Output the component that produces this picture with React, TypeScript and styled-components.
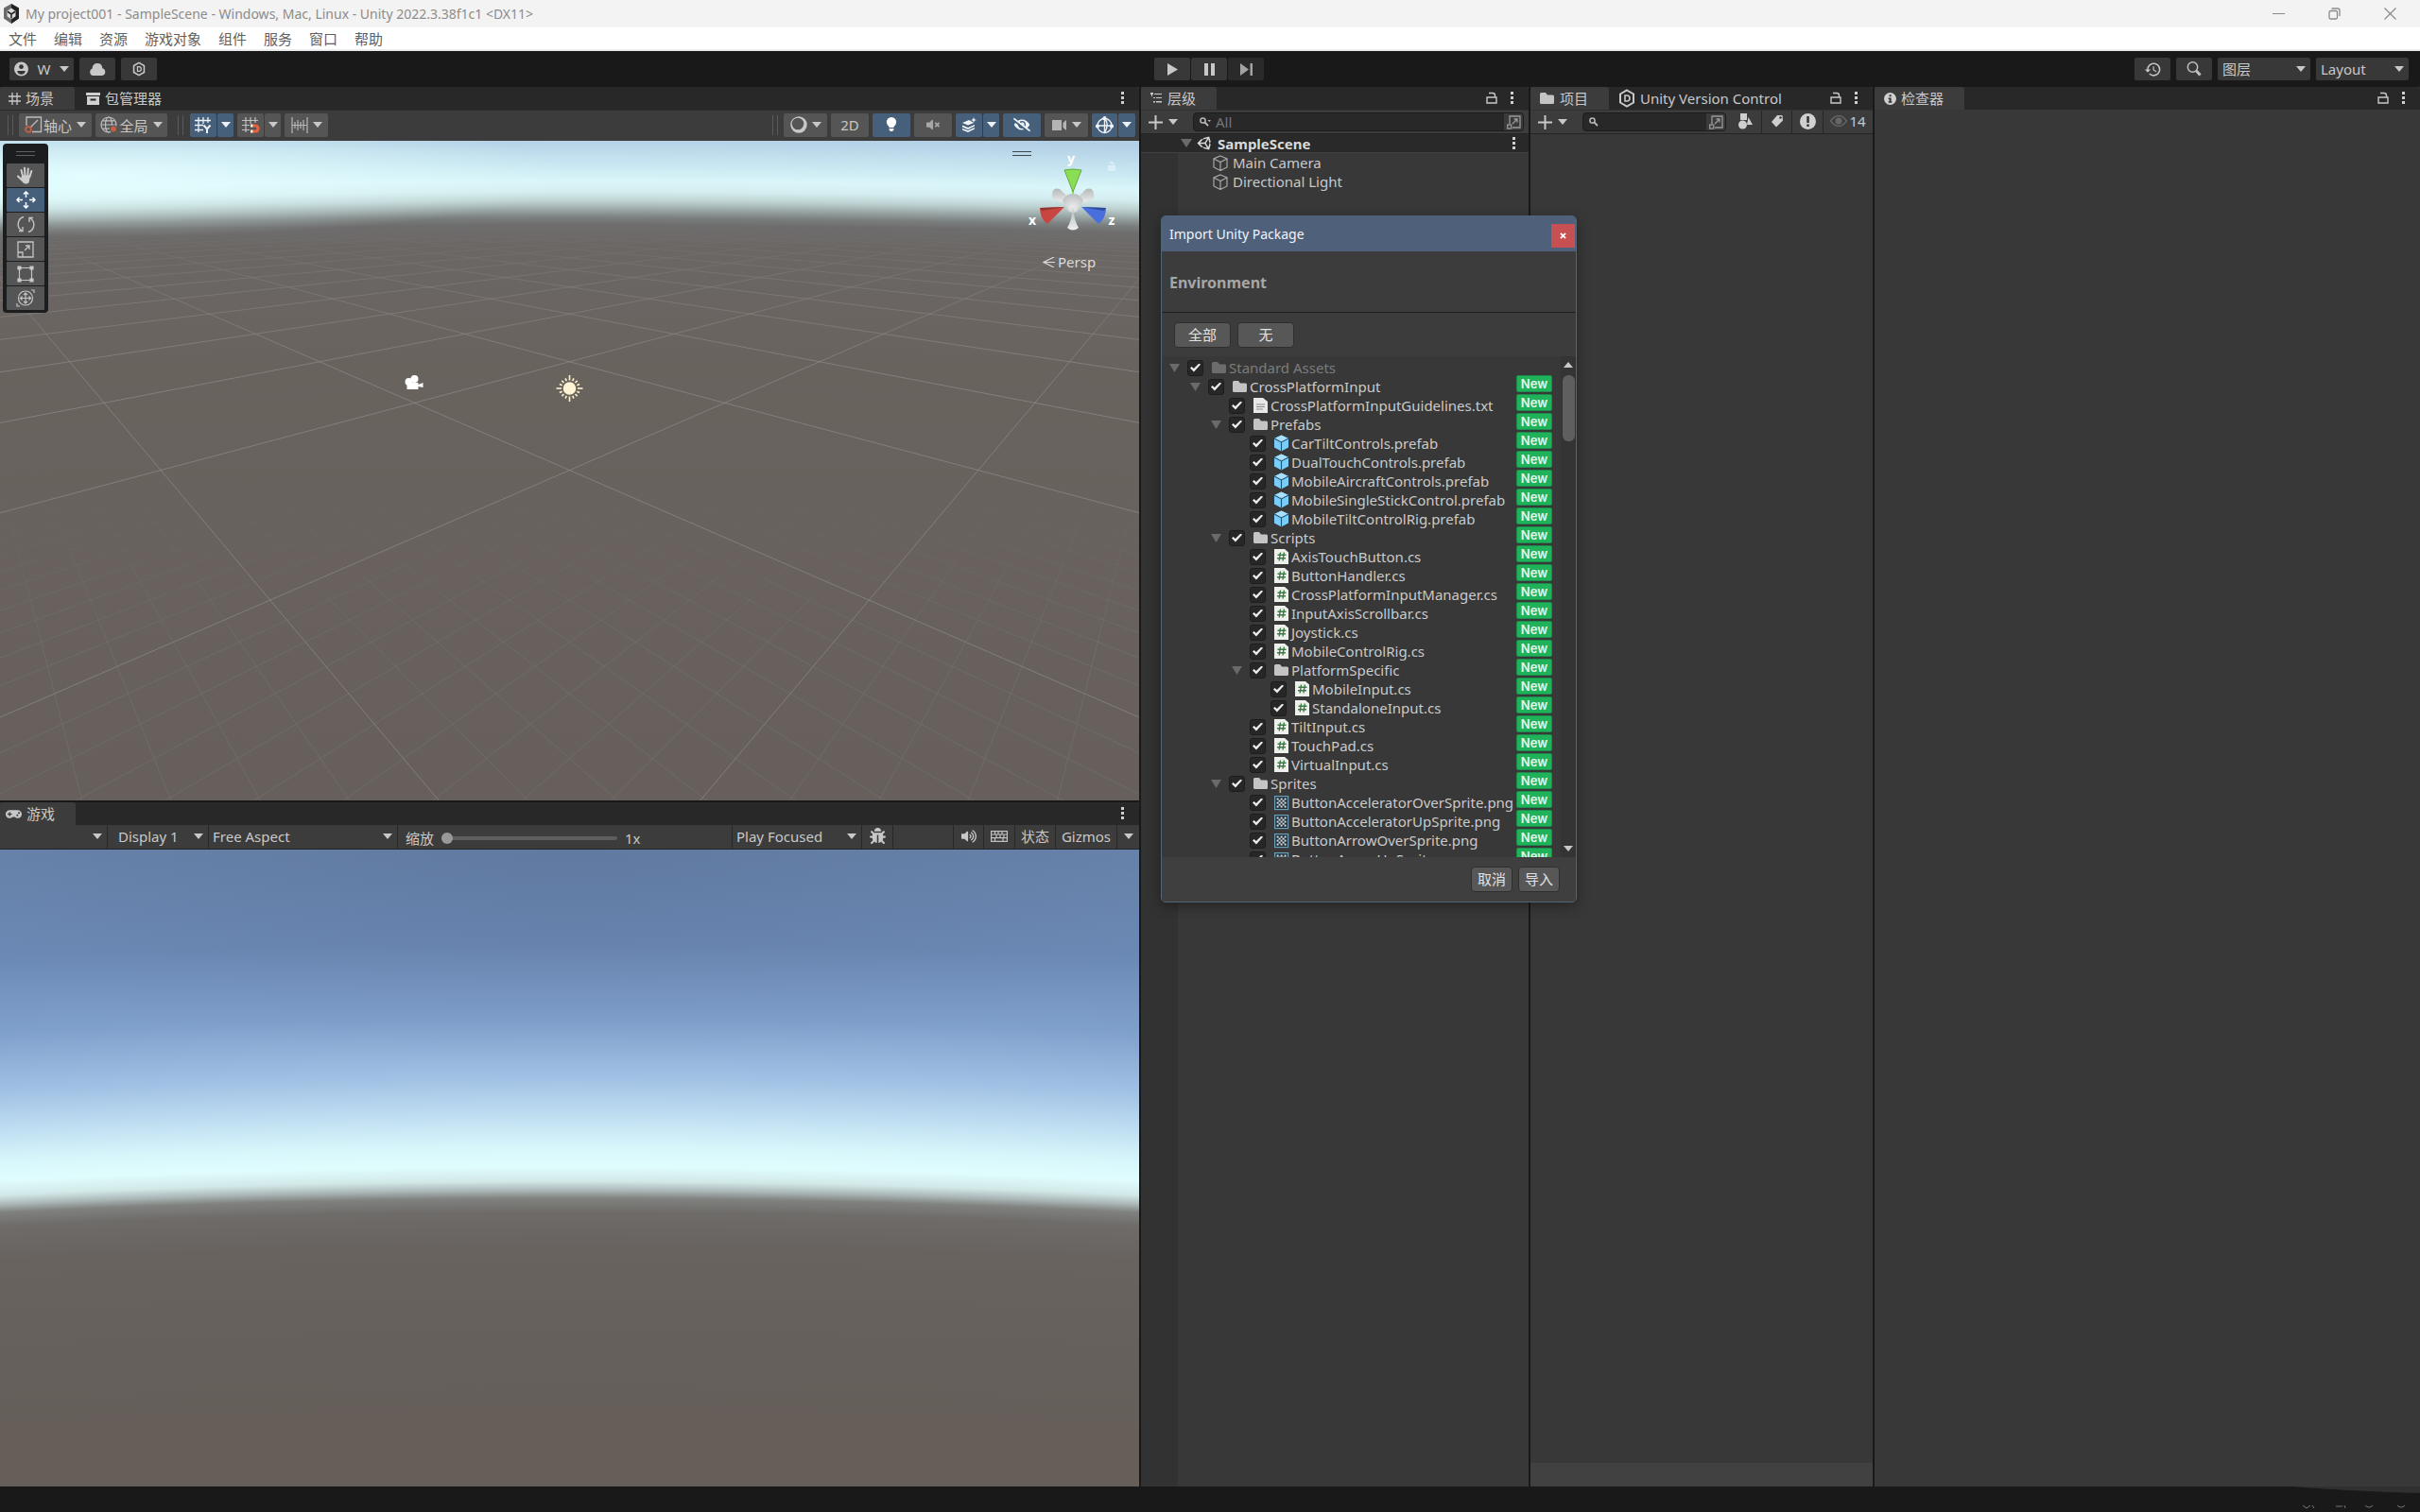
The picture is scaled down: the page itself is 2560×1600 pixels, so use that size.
import React from "react";
import styled, { createGlobalStyle, css } from "styled-components";
import { FaBug, FaEyeSlash, FaGamepad, FaUnity, FaVolumeMute, FaVolumeUp } from "react-icons/fa";
import { MdHistory } from "react-icons/md";

const ui = `"Noto Sans", "Noto Sans CJK SC", sans-serif`;

const GlobalStyle = createGlobalStyle`
  * { box-sizing: border-box; }
  html, body, #root { height: 100%; }
  body { margin: 0; background: #191919; overflow: hidden; }
  body, button, input, select { font-family: ${ui}; font-size: 15px; color: #c8c8c8; }
  button, input, select { margin: 0; padding: 0; border: 0; background: none; outline: none; }
  svg { display: block; flex: none; }
`;

const Page = styled.div`
  height: 100vh;
  display: flex;
  flex-direction: column;
`;

/* ---------- window chrome ---------- */

const TitleBar = styled.header`
  display: flex;
  align-items: center;
  height: 29px;
  padding: 0 2px 0 3px;
  gap: 6px;
  background: #f3f3f3;
  color: #8c8c8c;
  h1 { margin: 0; flex: 1; font-size: 14px; font-weight: 400; }
`;

const WindowButton = styled.button`
  display: grid;
  place-items: center;
  width: 59px;
  height: 29px;
  color: #8a8a8a;
`;

const MenuBar = styled.nav`
  display: flex;
  align-items: center;
  gap: 18px;
  height: 25px;
  padding: 0 9px;
  background: #fff;
  border-bottom: 2px solid #ececee;
  button { color: #606060; line-height: 22px; }
`;

const MainToolbar = styled.div`
  display: grid;
  grid-template-columns: 1fr auto 1fr;
  align-items: center;
  height: 38px;
  padding: 0 12px 0 10px;
  background: #191919;
`;

const Group = styled.div<{ $gap?: number; $end?: boolean }>`
  display: flex;
  align-items: center;
  gap: ${(p) => p.$gap ?? 6}px;
  justify-content: ${(p) => (p.$end ? "flex-end" : "flex-start")};
`;

const DarkButton = styled.button<{ $wide?: boolean; $dim?: boolean }>`
  display: flex;
  align-items: center;
  justify-content: center;
  gap: ${(p) => (p.$wide ? 10 : 0)}px;
  width: ${(p) => (p.$wide ? 68 : 38)}px;
  height: 24px;
  border-radius: 2px;
  background: ${(p) => (p.$dim ? "#2a2a2a" : "#383838")};
  color: ${(p) => (p.$dim ? "#a4a4a4" : "#c8c8c8")};
`;

const SelectBox = styled.span<{ $w?: number; $dark?: boolean; $pad?: number; $line?: boolean }>`
  display: grid;
  align-items: center;
  width: ${(p) => p.$w ?? 98}px;
  height: ${(p) => (p.$dark ? "24px" : "100%")};
  padding-bottom: ${(p) => (p.$dark ? 0 : 2)}px;
  background: ${(p) => (p.$dark ? "#383838" : "transparent")};
  border-radius: ${(p) => (p.$dark ? 2 : 0)}px;
  border-right: ${(p) => (p.$line ? "1px solid #282828" : "0")};
  select {
    grid-area: 1 / 1;
    appearance: none;
    width: 100%;
    height: 100%;
    padding-left: ${(p) => p.$pad ?? 5}px;
  }
  svg { grid-area: 1 / 1; justify-self: end; margin-right: 5px; pointer-events: none; }
`;

/* ---------- docks ---------- */

const Workspace = styled.main`
  flex: 1;
  min-height: 0;
  display: grid;
  grid-template-columns: minmax(0, 1205fr) minmax(0, 410fr) minmax(0, 362fr) minmax(0, 577fr);
  gap: 2px;
`;

const Column = styled.div`
  display: flex;
  flex-direction: column;
  gap: 2px;
  min-height: 0;
`;

const Panel = styled.section<{ $grow?: number }>`
  flex: ${(p) => p.$grow ?? 1} 1 0;
  min-height: 0;
  display: flex;
  flex-direction: column;
  background: #383838;
`;

const TabStrip = styled.div`
  display: flex;
  align-items: center;
  height: 24px;
  flex: none;
  background: #282828;
  border-radius: 3px 3px 0 0;
`;

const Tab = styled.button<{ $active?: boolean; $pad?: number }>`
  display: flex;
  align-items: center;
  gap: 5px;
  height: 24px;
  padding: 0 ${(p) => (p.$active ? 22 : 12)}px 0 ${(p) => p.$pad ?? 10}px;
  border-radius: 3px 3px 0 0;
  background: ${(p) => (p.$active ? "#3c3c3c" : "transparent")};
  line-height: 24px;
  white-space: nowrap;
`;

const TabTools = styled.div`
  display: flex;
  align-items: center;
  gap: 14px;
  margin-left: auto;
  padding-right: 15px;
`;

const IconButton = styled.button`
  display: flex;
  align-items: center;
  justify-content: center;
`;

const SceneToolbar = styled.div`
  display: flex;
  align-items: center;
  gap: 4px;
  height: 33px;
  flex: none;
  padding: 0 4px 2px 8px;
  background: #3c3c3c;
  border-top: 1px solid #2c2c2c;
`;

const Grip = styled.span<{ $spaced?: boolean }>`
  width: 6px;
  height: 21px;
  margin: 0 ${(p) => (p.$spaced ? "3px 0 7px" : "2px 0 0")};
  border: solid #5a5a5a;
  border-width: 0 1px;
`;

const ToolButton = styled.button<{ $w: number; $on?: boolean; $dim?: boolean }>`
  display: flex;
  align-items: center;
  justify-content: center;
  gap: 5px;
  width: ${(p) => p.$w}px;
  height: 25px;
  border-radius: 2px;
  background: ${(p) => (p.$on ? "#46607c" : "#555555")};
  color: ${(p) => (p.$on ? "#eef2f6" : p.$dim ? "#a8a8a8" : "#c8c8c8")};
`;

const Tight = styled.span`
  display: inline-flex;
  align-items: center;
  gap: 1px;
`;

const Spacer = styled.span`
  flex: 1;
`;

const Viewport = styled.div<{ $game?: boolean }>`
  position: relative;
  flex: 1;
  min-height: 0;
  overflow: hidden;
  ${(p) =>
    p.$game
      ? css`
          background:
            radial-gradient(ellipse 62% 34% at 50% 0, rgba(70, 86, 120, 0.24), transparent),
            radial-gradient(
              circle at 50% 12500px,
              #655e59 11900px,
              #68635f 12080px,
              #6e6b69 12116px,
              #80827f 12131px,
              #a9b5b5 12139px,
              #d2e8e8 12149px,
              #e0fdfd 12165px,
              #d8f7fb 12184px,
              #bddbf0 12222px,
              #a0c0e4 12260px,
              #80a0cc 12322px,
              #6c8ab6 12400px,
              #6884ac 12500px
            );
        `
      : css`
          background:
            radial-gradient(ellipse 520px 64px at 90px 38px, rgba(228, 255, 255, 0.9), transparent),
            radial-gradient(
              circle at 50% 20286px,
              #675f5b 19600px,
              #69635e 20050px,
              #6b6765 20176px,
              #6e6d6d 20197px,
              #7c8080 20205px,
              #9aa6a6 20213px,
              #bdd1d1 20222px,
              #d4edef 20232px,
              #daf6f9 20243px,
              #c8e6f1 20262px,
              #b2cfe5 20290px
            );
        `}
`;

const GridLayer = styled.svg`
  width: 100%;
  height: 100%;
`;

const ToolPalette = styled.div`
  position: absolute;
  left: 3px;
  top: 3px;
  display: flex;
  flex-direction: column;
  align-items: center;
  gap: 1px;
  padding: 0 4px 3px;
  border-radius: 4px;
  background: #1b1d1e;
`;

const PaletteHandle = styled.span`
  width: 20px;
  height: 5px;
  margin: 8px 0 7px;
  border: solid #5c6264;
  border-width: 1px 0;
`;

const PaletteButton = styled(ToolButton)`
  border-radius: 1px;
`;

const OverlayHandle = styled.span`
  position: absolute;
  right: 114px;
  top: 11px;
  width: 20px;
  height: 5px;
  border: solid #3b474d;
  border-width: 1px 0;
`;

const GizmoBox = styled.div`
  position: absolute;
  right: 20px;
  top: 6px;
  width: 100px;
`;

const PerspButton = styled.button`
  display: flex;
  align-items: center;
  gap: 3px;
  margin: 7px 0 0 18px;
  color: #dcdcdc;
  line-height: 20px;
`;

const GameToolbar = styled.div`
  display: flex;
  align-items: center;
  height: 26px;
  flex: none;
  background: #3c3c3c;
  border-bottom: 1px solid #232323;
`;

const Cell = styled.button<{ $w: number; $line?: boolean }>`
  display: flex;
  align-items: center;
  justify-content: center;
  gap: 2px;
  width: ${(p) => p.$w}px;
  height: 100%;
  padding-bottom: 2px;
  border-right: ${(p) => (p.$line === false ? "0" : "1px solid #282828")};
`;

const ScaleField = styled.label`
  flex: 1;
  display: flex;
  align-items: center;
  gap: 8px;
  height: 100%;
  padding: 3px 0 0 8px;
  border-right: 1px solid #282828;
  line-height: 20px;
`;

const Slider = styled.input`
  appearance: none;
  width: 186px;
  height: 12px;
  &::-webkit-slider-runnable-track { height: 4px; border-radius: 2px; background: #5e5e5e; }
  &::-webkit-slider-thumb {
    appearance: none;
    width: 12px;
    height: 12px;
    margin-top: -4px;
    border-radius: 50%;
    background: #999;
  }
`;

/* ---------- hierarchy and project ---------- */

const PanelToolbar = styled.div`
  display: flex;
  align-items: stretch;
  height: 26px;
  flex: none;
  background: #3c3c3c;
  border-top: 1px solid #323232;
  border-bottom: 1px solid #242424;
`;

const AddButton = styled(IconButton)`
  gap: 6px;
  padding: 0 16px 0 8px;
`;

const SearchField = styled.label<{ $flush?: boolean }>`
  flex: 1;
  min-width: 0;
  display: flex;
  align-items: center;
  gap: 5px;
  margin: 2px ${(p) => (p.$flush ? 4 : 5)}px 2px 0;
  padding-left: 6px;
  border: 1px solid #1c1c1c;
  border-radius: 4px;
  background: #282828;
  input { flex: 1; min-width: 0; }
  input::placeholder { color: #767676; opacity: 1; }
`;

const ExpandButton = styled(IconButton)`
  align-self: stretch;
  width: 20px;
  background: #3a3a3a;
  border-radius: 0 3px 3px 0;
`;

const HierarchyBody = styled.div`
  flex: 1;
  background: linear-gradient(90deg, #323232 39px, #383838 39px);
`;

const SceneRow = styled.div`
  display: flex;
  align-items: center;
  gap: 5px;
  height: 20px;
  padding: 0 13px 0 42px;
  background: #292929;
  border-bottom: 1px solid #424242;
  font-weight: 700;
  color: #dadada;
  line-height: 20px;
  span { flex: 1; }
  > svg:first-child { color: #6a6a6a; }
`;

const ObjectRow = styled.div`
  display: flex;
  align-items: center;
  gap: 5px;
  height: 20px;
  padding-left: 76px;
`;

const Blank = styled.div`
  flex: 1;
`;

const PathStrip = styled.div`
  height: 25px;
  background: #414141;
`;

const StatusBar = styled.footer`
  display: flex;
  justify-content: flex-end;
  height: 27px;
  flex: none;
  background: #191919;
`;

/* ---------- import dialog ---------- */

const Dialog = styled.section`
  position: absolute;
  left: 1228px;
  top: 228px;
  width: 440px;
  height: 727px;
  display: flex;
  flex-direction: column;
  border: 1px solid #52667a;
  border-radius: 5px;
  background: #3c3c3c;
  box-shadow: 0 4px 14px rgba(0, 0, 0, 0.35);
  overflow: hidden;
`;

const DialogTitle = styled.div`
  display: flex;
  align-items: center;
  justify-content: space-between;
  height: 37px;
  padding: 0 1px 0 8px;
  background: #4f607b;
  color: #f2f4f7;
  h2 { margin: 0; font-size: 14px; font-weight: 400; }
`;

const CloseButton = styled.button`
  width: 25px;
  height: 25px;
  margin-top: 4px;
  background: #c75052;
  display: grid;
  place-items: center;
  color: #fff;
`;

const PackageName = styled.h3`
  margin: 0;
  height: 65px;
  padding: 0 8px;
  border-bottom: 1px solid #1f1f1f;
  font-size: 16px;
  font-weight: 700;
  line-height: 66px;
  color: #a6a6a6;
`;

const ButtonRow = styled.div<{ $end?: boolean }>`
  display: flex;
  flex: none;
  gap: ${(p) => (p.$end ? 6 : 7)}px;
  justify-content: ${(p) => (p.$end ? "flex-end" : "flex-start")};
  padding: ${(p) => (p.$end ? "10px 17px 10px" : "10px 13px 9px")};
  background: ${(p) => (p.$end ? "#3f3f3f" : "transparent")};
`;

const PushButton = styled.button<{ $w: number }>`
  width: ${(p) => p.$w}px;
  height: 27px;
  border: 1px solid #2e2e2e;
  border-radius: 4px;
  background: #575757;
  color: #e2e2e2;
  line-height: 25px;
`;

const TreeArea = styled.div`
  flex: 1;
  min-height: 0;
  display: flex;
  background: #383838;
  overflow: hidden;
`;

const TreeList = styled.ul`
  flex: 1;
  min-width: 0;
  margin: 0;
  padding: 2px 9px 0 0;
  list-style: none;
`;

const TreeRow = styled.li<{ $level: number }>`
  display: flex;
  align-items: center;
  height: 20px;
  padding-left: ${(p) => 8 + p.$level * 22}px;
`;

const Twisty = styled.span`
  width: 11px;
  margin-right: 8px;
  color: #6a6a6a;
`;

const ItemLabel = styled.label<{ $faded?: boolean }>`
  flex: 1;
  min-width: 0;
  display: flex;
  align-items: center;
  gap: 2px;
  white-space: nowrap;
  line-height: 20px;
  color: ${(p) => (p.$faded ? "#7c7c7c" : "#cacaca")};
`;

const Check = styled.input`
  appearance: none;
  flex: none;
  width: 17px;
  height: 17px;
  margin: 0 6px 0 0;
  border: 1px solid #1c1c1c;
  border-radius: 3px;
  background: #272727;
  display: grid;
  place-items: center;
  &:checked::before {
    content: "";
    width: 11px;
    height: 9px;
    background: #ececec;
    clip-path: polygon(0 55%, 14% 38%, 35% 62%, 86% 0, 100% 14%, 36% 100%);
  }
`;

const NewBadge = styled.span`
  align-self: flex-start;
  flex: none;
  width: 38px;
  height: 18px;
  margin-top: -2px;
  border: 1px solid #1a8f49;
  border-radius: 2px;
  background: #1fb25b;
  color: #e6f8ec;
  font: 600 13px / 16px Inter, sans-serif;
  text-align: center;
  z-index: 1;
`;

const ScrollTrack = styled.div`
  width: 16px;
  display: flex;
  flex-direction: column;
  align-items: center;
  gap: 8px;
  padding: 6px 0;
  background: #343434;
  svg:last-child { margin-top: auto; }
`;

const ScrollThumb = styled.span`
  width: 13px;
  height: 70px;
  border-radius: 6px;
  background: #5f5f5f;
`;

/* ---------- icons ---------- */

const Caret = ({ w = 10, up = false }: { w?: number; up?: boolean }) => (
  <svg width={w} height={w === 10 ? 6 : 9} viewBox="0 0 10 6" preserveAspectRatio="none" fill="currentColor">
    <path d={up ? "M0 6h10L5 0z" : "M0 0h10L5 6z"} />
  </svg>
);

const Kebab = () => (
  <svg width="4" height="14" viewBox="0 0 4 14" fill="#d0d0d0">
    <rect width="3" height="3" />
    <rect y="5" width="3" height="3" />
    <rect y="10" width="3" height="3" />
  </svg>
);

const LockIcon = () => (
  <svg width="12" height="15" viewBox="0 0 12 15" fill="none" stroke="#c8c8c8" strokeWidth="1.400">
    <path d="M1 6h10v6H1zM3 1.500H7Q9.500 1.500 9.500 4V6" />
  </svg>
);

const PlusIcon = () => (
  <svg width="15" height="15" viewBox="0 0 15 15" stroke="#c8c8c8" strokeWidth="2">
    <path d="M7.500 0v15M0 7.500h15" />
  </svg>
);

const MagnifierIcon = ({ menu }: { menu?: boolean }) => (
  <svg width="12" height="10" viewBox="0 0 12 10" fill="none" stroke="#b8b8b8" strokeWidth="1.500">
    <circle cx="3.500" cy="3.500" r="2.600" />
    <path d="M5.500 5.500l3.500 3.500" strokeWidth="1.800" />
    {menu && <path d="M8.500 3h3.500l-1.700 2z" fill="#b8b8b8" stroke="none" />}
  </svg>
);

const ExpandIcon = () => (
  <svg width="15" height="15" viewBox="0 0 15 15" fill="none" stroke="#9a9a9a" strokeWidth="1.300">
    <path d="M3 9V1h11v12H6" />
    <rect x=".7" y="10" width="4" height="4" />
    <path d="M6 9l5-5M7.500 4H11v3.500" />
  </svg>
);

const FolderIcon = ({ dim }: { dim?: boolean }) => (
  <svg width="17" height="14" viewBox="0 0 17 14" fill={dim ? "#6c6c6c" : "#c4c4c4"}>
    <path d="M1 2.500Q1 1 2.500 1H7l2 2.500h5.500q1.500 0 1.500 1.500v6.500q0 1.500-1.500 1.500h-12Q1 13 1 11.500z" />
  </svg>
);

const TextFileIcon = () => (
  <svg width="17" height="18" viewBox="0 0 17 18">
    <path d="M1 1h10l5 4v12H1z" fill="#e8e8e8" />
    <path d="M4 8h9M4 10.500h9M4 13h7" stroke="#8a8a8a" />
  </svg>
);

const ScriptIcon = () => (
  <svg width="17" height="18" viewBox="0 0 17 18">
    <path d="M1 1h11l4 3.500V17H1z" fill="#eef0ec" />
    <path d="M7.500 4.500l-1.300 9M11.300 4.500l-1.300 9M4.500 7.200h9M4 10.800h9" stroke="#3c7a45" strokeWidth="1.400" fill="none" />
  </svg>
);

const PrefabIcon = () => (
  <svg width="17" height="18" viewBox="0 0 17 18">
    <path d="M8.500 .5l7.500 3.500v9.500l-7.500 4-7.500-4V4z" fill="#79cdf8" />
    <path d="M8.500 .5l7.500 3.500-7.500 4L1 4z" fill="#a5e1fd" />
    <path d="M1 4l7.500 4 7.500-4M8.500 8v9.500" stroke="#28526b" strokeWidth="1.100" fill="none" />
  </svg>
);

const SpriteIcon = () => (
  <svg width="17" height="17" viewBox="0 0 17 17">
    <rect x="1.600" y="1.600" width="14" height="14" fill="#23303a" stroke="#6ba0b8" strokeWidth="1.200" />
    {[0, 1, 2, 3, 4].flatMap((r) =>
      [0, 1, 2, 3, 4]
        .filter((c) => (r + c) % 2 === 0)
        .map((c) => <rect key={`${r}${c}`} x={3.6 + c * 2} y={3.6 + r * 2} width="2" height="2" fill="#d5dde0" />)
    )}
  </svg>
);

const CubeIcon = () => (
  <svg width="16" height="17" viewBox="0 0 16 17" fill="none" stroke="#a8a8a8" strokeWidth="1.200">
    <path d="M8 1l7 3v9l-7 3.500L1 13V4zM1 4l7 3.500L15 4M8 7.500v9" />
  </svg>
);

const VersionIcon = ({ size = 18 }: { size?: number }) => (
  <svg width={size} height={size + 2} viewBox="0 0 18 20" fill="none" stroke="#c8c8c8" strokeWidth="2">
    <path d="M9 1.500l7 4v9l-7 4-7-4v-9z" />
    <path d="M7 7v6h2q3 0 3-3t-3-3z" strokeWidth="1.600" />
  </svg>
);

const AppIcon = () => (
  <svg width="18" height="21" viewBox="0 0 18 19" preserveAspectRatio="none">
    <path d="M9 0l8 4v10l-8 5-8-5V4z" fill="#6a6a6a" />
    <path d="M9 0l8 4v10l-8 5z" fill="#222" />
    <path d="M9 4l4.500 3v5L9 15l-4.500-3V7z" fill="#dcdcdc" />
    <path d="M9 10v4M9 10L5 7.500M9 10l4-2.500" stroke="#222" strokeWidth="1.500" />
  </svg>
);

const UserIcon = () => (
  <svg width="15" height="16" viewBox="0 0 16 16">
    <circle cx="8" cy="8" r="8" fill="#c8c8c8" />
    <circle cx="8" cy="5.500" r="2.500" fill="#333" />
    <path d="M3.500 10h9q-.5 4-4.500 4t-4.500-4z" fill="#333" />
  </svg>
);

const CloudIcon = () => (
  <svg width="18" height="13" viewBox="0 0 18 13" fill="#c8c8c8">
    <path d="M4 13a4 4 0 01-.5-7.500Q4 0 9 0t5.300 5.200A4 4 0 0114 13z" />
  </svg>
);

const HashIcon = () => (
  <svg width="13" height="13" viewBox="0 0 13 13" stroke="#c8c8c8" strokeWidth="1.300">
    <path d="M4 0v13M9 0v13M0 4h13M0 9h13" />
  </svg>
);

const PackageIcon = () => (
  <svg width="15" height="13" viewBox="0 0 15 13" fill="#d0d0d0">
    <path d="M0 0h15v3H0zM1 4h13v9H1zm3.500 2.500v2h6v-2z" fillRule="evenodd" />
  </svg>
);

const PivotIcon = () => (
  <svg width="19" height="20" viewBox="0 0 19 18" fill="none" stroke="#bdbdbd" strokeWidth="1.300">
    <path d="M2 10V1h15.500v15.500H8M6 12l8-8" />
    <circle cx="4" cy="14" r="2.800" stroke="#c8603f" strokeWidth="1.800" />
  </svg>
);

const GlobeIcon = () => (
  <svg width="19" height="18" viewBox="0 0 19 18" fill="none" stroke="#bdbdbd" strokeWidth="1.200">
    <circle cx="9" cy="9" r="8" />
    <ellipse cx="9" cy="9" rx="3.500" ry="8" />
    <path d="M1 9h16M2.500 4.800h13M2.500 13.200h13" />
    <circle cx="14" cy="13.500" r="3.500" fill="#c8603f" stroke="#555" />
  </svg>
);

const GridAxisIcon = () => (
  <svg width="18" height="19" viewBox="0 0 18 19" fill="none" stroke="#eef2f6" strokeWidth="1.300">
    <path d="M4 1v16M9 1v7M14 1v6M0 4.500h17M0 9.500h9M0 14.500h9" />
    <path d="M9.500 9.500l3.500 4 3.500-4M13 13.500V18" strokeWidth="2" />
  </svg>
);

const GridSnapIcon = () => (
  <svg width="19" height="19" viewBox="0 0 19 19" fill="none" stroke="#c0c0c0" strokeWidth="1.200">
    <path d="M4 1v16M9 1v7M14 1v6M0 4.500h17M0 9.500h8M0 14.500h8" />
    <path d="M10 10h4q3 0 3 3t-3 3h-4" stroke="#e8603c" strokeWidth="3.200" />
    <path d="M9 10h2.500M9 16h2.500" stroke="#eee" strokeWidth="3.200" />
  </svg>
);

const RulerIcon = () => (
  <svg width="18" height="17" viewBox="0 0 18 17" stroke="#b8b8b8" strokeWidth="1.200">
    <path d="M1 0v17M4 5v7M7 3v11M10 5v7M13 3v11M17 0v17M1 8.500h16" />
  </svg>
);

const ShadingIcon = () => (
  <svg width="18" height="18" viewBox="0 0 18 18" fill="#c8c8c8" fillRule="evenodd">
    <path d="M9 .3a8.700 8.700 0 010 17.400A8.700 8.700 0 019 .3zM8 1.700a6.300 6.300 0 000 12.600A6.300 6.300 0 008 1.700z" />
  </svg>
);

const BulbIcon = () => (
  <svg width="12" height="16" viewBox="0 0 12 16" fill="#fff">
    <path d="M6 0a5.200 5.200 0 015.200 5.200Q11 8 8.500 10v1h-5v-1Q1 8 .8 5.200A5.200 5.200 0 016 0zM3.500 12h5v1.500h-1V15h-3v-1.500h-1z" />
  </svg>
);

const LayersIcon = () => (
  <svg width="17" height="16" viewBox="0 0 17 16" fill="#f0f4f8">
    <path d="M8 3L1 6l6 2.500 6-2.500zM1 8.500l6 2.500 7-3v1.500L7 13 1 10.500zM1 12l6 2 7-3v1.500L7 16l-6-2.500zM13 0l.8 2.200L16 3l-2.200.8L13 6l-.8-2.200L10 3l2.200-.8z" />
  </svg>
);

const VideoIcon = () => (
  <svg width="16" height="11" viewBox="0 0 16 11" fill="#b4b4b4">
    <path d="M0 0h10v11H0zM11.500 3L15 0v11l-3.500-3z" />
  </svg>
);

const GizmoSphereIcon = () => (
  <svg width="19" height="19" viewBox="0 0 19 19" fill="none" stroke="#eef2f6" strokeWidth="1.400">
    <circle cx="9.500" cy="10" r="7.500" />
    <path d="M2 10h15M9.500 2v16M9.500 2.500Q15 8 9.500 17.500" />
    <circle cx="9.500" cy="2.200" r="1.400" fill="#fff" />
    <circle cx="2" cy="10.500" r="1.400" fill="#fff" />
    <circle cx="17" cy="10.500" r="1.400" fill="#fff" />
  </svg>
);

const HandIcon = () => (
  <svg width="20" height="20" viewBox="0 0 20 20" fill="none" stroke="#cdcdcd" strokeLinecap="round" strokeWidth="2">
    <path d="M5.500 4l1.500 6M9 1.800l.5 8M12.800 2.500L12.300 10M16.300 5L14.500 11M2 10.500l4 4" />
    <path d="M6 9.500h9l-1 6q-.5 3-3 3T7 17l-2-3.500z" fill="#cdcdcd" stroke="none" />
  </svg>
);

const MoveIcon = () => (
  <svg width="21" height="19" viewBox="0 0 21 19" fill="none" stroke="#fff" strokeWidth="1.500">
    <path d="M10.500 1v6M10.500 12v6M1 9.500h6M14 9.500h6M8 3.500L10.500 1 13 3.500M8 15.500l2.500 2.500 2.500-2.500M3.500 7L1 9.500 3.500 12M17.500 7L20 9.500 17.500 12" />
  </svg>
);

const RotateIcon = () => (
  <svg width="19" height="19" viewBox="0 0 19 19" fill="none" stroke="#c4c4c4" strokeWidth="1.400">
    <path d="M7 1.500A8 8 0 005 16M2 16.500h4V12M12 17.500A8 8 0 0014 3M17 2.500h-4V7" />
  </svg>
);

const ScaleIcon = () => (
  <svg width="18" height="18" viewBox="0 0 18 18" fill="none" stroke="#c4c4c4" strokeWidth="1.300">
    <path d="M1 1h16v16H1zM1 12h5v5M8 10l5-5M9 5h4v4" />
  </svg>
);

const RectIcon = () => (
  <svg width="18" height="18" viewBox="0 0 18 18" fill="#d0d0d0" stroke="#c4c4c4" strokeWidth="1.200">
    <path d="M2.500 2.500h13v13h-13z" fill="none" />
    <path d="M1 1h3v3H1zM14 1h3v3h-3zM1 14h3v3H1zM14 14h3v3h-3z" />
  </svg>
);

const TransformIcon = () => (
  <svg width="20" height="19" viewBox="0 0 20 19" fill="none" stroke="#c4c4c4" strokeWidth="1.200">
    <circle cx="10" cy="9.500" r="7.500" />
    <path d="M10 4v11M4.500 9.500h11M8 6l2-2 2 2M8 13l2 2 2-2M6.500 7.500l-2 2 2 2M13.500 7.500l2 2-2 2M16 1h3v3M1 15v3h3" />
  </svg>
);

const HierarchyIcon = () => (
  <svg width="13" height="12" viewBox="0 0 13 12" fill="#c8c8c8">
    <path d="M0 0h3v2H0zM4 1h8v1H4zM3 5h2v1H3zM6 5h6v1H6zM3 9h2v1.500H3zM6 9h6v1.500H6zM1 2h1v2H1z" />
  </svg>
);

const InfoIcon = () => (
  <svg width="13" height="13" viewBox="0 0 14 14">
    <circle cx="7" cy="7" r="7" fill="#d0d0d0" />
    <path d="M6 2.500h2.200v2H6zM5 6h3.200v4H9v1.500H5V10h1V7.500H5z" fill="#333" />
  </svg>
);

const ShapesIcon = () => (
  <svg width="15" height="17" viewBox="0 0 15 17" fill="#cfcfcf">
    <path d="M2 0h7v7H2zM10.500 4l4.500 8H9z" />
    <circle cx="4.500" cy="12" r="4.500" />
  </svg>
);

const TagIcon = () => (
  <svg width="14" height="14" viewBox="0 0 14 14">
    <path d="M7 1h5.500l.5 5.500-7 7L1 8z" fill="#cfcfcf" />
    <circle cx="10.500" cy="3.500" r="1.200" fill="#333" />
  </svg>
);

const AlertIcon = () => (
  <svg width="17" height="17" viewBox="0 0 17 17">
    <circle cx="8.500" cy="8.500" r="8.500" fill="#d0d0d0" />
    <path d="M7.300 3h2.500v7H7.300zM7.300 11.500h2.500V14H7.300z" fill="#333" />
  </svg>
);

const EyeIcon = () => (
  <svg width="18" height="12" viewBox="0 0 18 12">
    <path d="M.5 6Q9-5 17.500 6 9 17 .5 6z" fill="none" stroke="#666" strokeWidth="1.400" />
    <circle cx="9" cy="6" r="3.500" fill="#666" />
  </svg>
);

const KeyboardIcon = () => (
  <svg width="18" height="12" viewBox="0 0 18 12" fill="none" stroke="#c0c0c0" strokeWidth="1.200">
    <path d="M.6.6h16.800v10.800H.6zM1 4h16M1 7.700h16M4.500 1v3M8 1v3M12 1v3M6 4v3.500M10 4v3.500M14 4v3.500M4.500 8v3M13 8v3" />
  </svg>
);

const PerspIcon = () => (
  <svg width="13" height="11" viewBox="0 0 13 11" fill="none" stroke="#d8d8d8" strokeWidth="1.200">
    <path d="M12 0L1 5.500 12 11M1 5.500h12" />
  </svg>
);

const SearchIcon = () => (
  <svg width="16" height="16" viewBox="0 0 16 16" fill="none" stroke="#c0c0c0">
    <circle cx="6.500" cy="6" r="5.200" strokeWidth="1.500" />
    <path d="M10.500 10l4 4.500" strokeWidth="3" />
  </svg>
);

const OrientationGizmo = () => (
  <svg width="100" height="105" viewBox="0 0 100 105">
    <defs>
      <radialGradient id="hub" cx=".5" cy=".7" r=".8">
        <stop offset="0" stopColor="#ececec" />
        <stop offset="1" stopColor="#b4b8ba" />
      </radialGradient>
      <linearGradient id="arm" x1="0" y1="0" x2="0" y2="1">
        <stop offset="0" stopColor="#b4b8ba" />
        <stop offset="1" stopColor="#eeeeee" />
      </linearGradient>
    </defs>
    <path d="M28 50q1-7 8-5l11 11-5 4q-8-2-12-4-3-2-2-6zM72 50q-1-7-8-5L53 56l5 4q8-2 12-4 3-2 2-6z" fill="url(#arm)" />
    <path d="M50 45v10" stroke="#8fe05a" strokeWidth="2" />
    <path d="M39 58q3-8 11-8t11 8q-4 4-6 10-5 4-10 0-2-6-6-10z" fill="url(#hub)" />
    <path d="M50 64q-1 14-6 22 6 5 12 0-5-8-6-22z" fill="url(#arm)" />
    <path d="M41 25q9-2 18 0L50 48z" fill="#8ade55" stroke="#64a83c" />
    <path d="M15 65l26-1-18 18q-8-6-8-17z" fill="#c8463f" />
    <path d="M15 65l26-1-24 4z" fill="#8f3530" />
    <path d="M85 65l-26-1 18 18q8-6 8-17z" fill="#4a6fdc" />
    <path d="M85 65l-26-1 24 4z" fill="#304c9c" />
    <g fill="#fff" fontFamily="Noto Sans, sans-serif" fontWeight="700" fontSize="14" textAnchor="middle">
      <text x="48" y="18">y</text>
      <text x="7" y="83">x</text>
      <text x="91" y="83">z</text>
    </g>
    <path d="M87 20h8v6h-8zM88 17q5-3 6 3" fill="#e8f6fb" opacity=".6" />
  </svg>
);

/* ---------- scene grid ---------- */

const CAMERA = { cx: 603, kx: 681, ky: 931, horizon: 53, depth: 3.15 };

const project = (a: number, b: number) => {
  const w = CAMERA.depth + a + b;
  return [CAMERA.cx + (CAMERA.kx * (a - b)) / w, CAMERA.horizon + CAMERA.ky / w];
};

const gridPath = (step: number, reach: number, far: number, skipWhole: boolean) => {
  const parts: string[] = [];
  const count = Math.round(reach / step);
  for (let i = -count; i <= count; i++) {
    const a = i * step;
    if (skipWhole && Math.abs(a - Math.round(a)) < 0.001) continue;
    const near = 0.6 - CAMERA.depth - a;
    const end = far - CAMERA.depth - a;
    const [x1, y1] = project(a, near);
    const [x2, y2] = project(a, end);
    parts.push(`M${x1} ${y1}L${x2} ${y2}M${2 * CAMERA.cx - x1} ${y1}L${2 * CAMERA.cx - x2} ${y2}`);
  }
  return parts.join("");
};

const majorGrid = gridPath(1, 22, 28, false);
const minorGrid = gridPath(0.1, 4, 3.4, true);

const SceneGrid = () => (
  <GridLayer viewBox="0 0 1206 698" preserveAspectRatio="xMidYMid slice" aria-hidden="true">
    <defs>
      <linearGradient id="majorFade" x1="0" y1="0" x2="0" y2="698" gradientUnits="userSpaceOnUse">
        <stop offset=".13" stopColor="#fff" stopOpacity="0" />
        <stop offset=".22" stopColor="#fff" stopOpacity=".6" />
        <stop offset=".35" stopColor="#fff" />
      </linearGradient>
      <linearGradient id="minorFade" x1="0" y1="0" x2="0" y2="698" gradientUnits="userSpaceOnUse">
        <stop offset=".5" stopColor="#fff" stopOpacity="0" />
        <stop offset=".78" stopColor="#fff" />
      </linearGradient>
      <mask id="majorMask" maskUnits="userSpaceOnUse" x="0" y="0" width="1206" height="698">
        <rect width="1206" height="698" fill="url(#majorFade)" />
      </mask>
      <mask id="minorMask" maskUnits="userSpaceOnUse" x="0" y="0" width="1206" height="698">
        <rect width="1206" height="698" fill="url(#minorFade)" />
      </mask>
    </defs>
    <path d={majorGrid} mask="url(#majorMask)" stroke="#908c87" strokeOpacity=".7" fill="none" />
    <path d={minorGrid} mask="url(#minorMask)" stroke="#80837a" strokeOpacity=".34" fill="none" />
    <g transform="translate(438 256)" fill="#fff">
      <circle cx="-5" cy="-1" r="4" />
      <circle cx="1" cy="-4" r="4" />
      <path d="M-7 0H5V7H-7zM5 2l5-2v5L5 4z" />
    </g>
    <g transform="translate(603 262)" stroke="#fff2d0" strokeWidth="1.600">
      <circle r="6" fill="#fff3d6" />
      {Array.from({ length: 16 }, (_, i) => (
        <path key={i} d={i % 4 ? "M0-8.500V-11.500" : "M0-8.500V-14"} transform={`rotate(${i * 22.5})`} />
      ))}
    </g>
  </GridLayer>
);

/* ---------- data ---------- */

type Kind = "folder" | "text" | "prefab" | "script" | "sprite";
type Item = [level: number, kind: Kind, name: string];

const items: Item[] = [
  [0, "folder", "Standard Assets"],
  [1, "folder", "CrossPlatformInput"],
  [2, "text", "CrossPlatformInputGuidelines.txt"],
  [2, "folder", "Prefabs"],
  [3, "prefab", "CarTiltControls.prefab"],
  [3, "prefab", "DualTouchControls.prefab"],
  [3, "prefab", "MobileAircraftControls.prefab"],
  [3, "prefab", "MobileSingleStickControl.prefab"],
  [3, "prefab", "MobileTiltControlRig.prefab"],
  [2, "folder", "Scripts"],
  [3, "script", "AxisTouchButton.cs"],
  [3, "script", "ButtonHandler.cs"],
  [3, "script", "CrossPlatformInputManager.cs"],
  [3, "script", "InputAxisScrollbar.cs"],
  [3, "script", "Joystick.cs"],
  [3, "script", "MobileControlRig.cs"],
  [3, "folder", "PlatformSpecific"],
  [4, "script", "MobileInput.cs"],
  [4, "script", "StandaloneInput.cs"],
  [3, "script", "TiltInput.cs"],
  [3, "script", "TouchPad.cs"],
  [3, "script", "VirtualInput.cs"],
  [2, "folder", "Sprites"],
  [3, "sprite", "ButtonAcceleratorOverSprite.png"],
  [3, "sprite", "ButtonAcceleratorUpSprite.png"],
  [3, "sprite", "ButtonArrowOverSprite.png"],
  [3, "sprite", "ButtonArrowUpSprite.png"],
];

const kindIcons: Record<Kind, React.ReactNode> = {
  folder: <FolderIcon />,
  text: <TextFileIcon />,
  prefab: <PrefabIcon />,
  script: <ScriptIcon />,
  sprite: <SpriteIcon />,
};

const menus = ["文件", "编辑", "资源", "游戏对象", "组件", "服务", "窗口", "帮助"];

/* ---------- parts ---------- */

const Dropdown = ({ label, value, ...box }: { label: string; value: string; $w?: number; $dark?: boolean; $pad?: number; $line?: boolean }) => (
  <SelectBox {...box}>
    <select aria-label={label} defaultValue={value}>
      <option>{value}</option>
    </select>
    <Caret />
  </SelectBox>
);

const ImportDialog = () => (
  <Dialog role="dialog" aria-labelledby="import-title">
    <DialogTitle>
      <h2 id="import-title">Import Unity Package</h2>
      <CloseButton aria-label="Close">
        <svg width="7" height="7" viewBox="0 0 8 8" stroke="#fff" strokeWidth="2">
          <path d="M1 1l6 6M7 1L1 7" />
        </svg>
      </CloseButton>
    </DialogTitle>
    <PackageName>Environment</PackageName>
    <ButtonRow>
      <PushButton $w={60}>全部</PushButton>
      <PushButton $w={60}>无</PushButton>
    </ButtonRow>
    <TreeArea>
      <TreeList>
        {items.map(([level, kind, name], i) => (
          <TreeRow key={name} $level={level}>
            <Twisty>{kind === "folder" && <Caret w={11} />}</Twisty>
            <ItemLabel $faded={i === 0}>
              <Check type="checkbox" defaultChecked />
              {i === 0 ? <FolderIcon dim /> : kindIcons[kind]}
              {name}
            </ItemLabel>
            {i > 0 && <NewBadge>New</NewBadge>}
          </TreeRow>
        ))}
      </TreeList>
      <ScrollTrack>
        <Caret up />
        <ScrollThumb />
        <Caret />
      </ScrollTrack>
    </TreeArea>
    <ButtonRow $end>
      <PushButton $w={44}>取消</PushButton>
      <PushButton $w={44}>导入</PushButton>
    </ButtonRow>
  </Dialog>
);

const ScenePanel = () => (
  <Panel $grow={755}>
    <TabStrip>
      <Tab $active $pad={9}><HashIcon />场景</Tab>
      <Tab $pad={12}><PackageIcon />包管理器</Tab>
      <TabTools><IconButton aria-label="Menu"><Kebab /></IconButton></TabTools>
    </TabStrip>
    <SceneToolbar>
      <Grip />
      <ToolButton $w={77}><Tight><PivotIcon />轴心</Tight><Caret /></ToolButton>
      <ToolButton $w={76}><Tight><GlobeIcon />全局</Tight><Caret /></ToolButton>
      <Grip $spaced />
      <Tight>
        <ToolButton $w={28} $on aria-label="Grid"><GridAxisIcon /></ToolButton>
        <ToolButton $w={17} $on aria-label="Grid options"><Caret /></ToolButton>
      </Tight>
      <Tight>
        <ToolButton $w={28} aria-label="Snap"><GridSnapIcon /></ToolButton>
        <ToolButton $w={17} aria-label="Snap options"><Caret /></ToolButton>
      </Tight>
      <ToolButton $w={46} aria-label="Increment"><RulerIcon /><Caret /></ToolButton>
      <Spacer />
      <Grip />
      <ToolButton $w={46} aria-label="Shading"><ShadingIcon /><Caret /></ToolButton>
      <ToolButton $w={40}>2D</ToolButton>
      <ToolButton $w={40} $on aria-label="Lighting"><BulbIcon /></ToolButton>
      <ToolButton $w={40} $dim aria-label="Audio"><FaVolumeMute size={14} /></ToolButton>
      <Tight>
        <ToolButton $w={28} $on aria-label="Effects"><LayersIcon /></ToolButton>
        <ToolButton $w={17} $on aria-label="Effects options"><Caret /></ToolButton>
      </Tight>
      <ToolButton $w={40} $on aria-label="Hidden objects"><FaEyeSlash size={18} /></ToolButton>
      <ToolButton $w={46} aria-label="Camera"><VideoIcon /><Caret /></ToolButton>
      <Tight>
        <ToolButton $w={27} $on aria-label="Gizmos"><GizmoSphereIcon /></ToolButton>
        <ToolButton $w={18} $on aria-label="Gizmo options"><Caret /></ToolButton>
      </Tight>
    </SceneToolbar>
    <Viewport>
      <SceneGrid />
      <ToolPalette>
        <PaletteHandle />
        <PaletteButton $w={40} aria-label="View"><HandIcon /></PaletteButton>
        <PaletteButton $w={40} $on aria-label="Move"><MoveIcon /></PaletteButton>
        <PaletteButton $w={40} aria-label="Rotate"><RotateIcon /></PaletteButton>
        <PaletteButton $w={40} aria-label="Scale"><ScaleIcon /></PaletteButton>
        <PaletteButton $w={40} aria-label="Rect"><RectIcon /></PaletteButton>
        <PaletteButton $w={40} aria-label="Transform"><TransformIcon /></PaletteButton>
      </ToolPalette>
      <OverlayHandle />
      <GizmoBox>
        <OrientationGizmo />
        <PerspButton><PerspIcon />Persp</PerspButton>
      </GizmoBox>
    </Viewport>
  </Panel>
);

const GamePanel = () => (
  <Panel $grow={724}>
    <TabStrip>
      <Tab $active $pad={6}><FaGamepad size={17} />游戏</Tab>
      <TabTools><IconButton aria-label="Menu"><Kebab /></IconButton></TabTools>
    </TabStrip>
    <GameToolbar>
      <Dropdown label="View" value="" $w={114} $line />
      <Dropdown label="Display" value="Display 1" $w={107} $pad={11} $line />
      <Dropdown label="Aspect" value="Free Aspect" $w={200} $pad={4} $line />
      <ScaleField>
        缩放
        <Slider type="range" min={1} max={5} defaultValue={1} />
        1x
      </ScaleField>
      <Dropdown label="Play mode" value="Play Focused" $w={137} $pad={4} $line />
      <Cell $w={33} aria-label="Debug"><FaBug size={17} /></Cell>
      <Cell $w={64} aria-label="Options" />
      <Cell $w={32} aria-label="Mute"><FaVolumeUp size={16} /></Cell>
      <Cell $w={33} aria-label="Shortcuts"><KeyboardIcon /></Cell>
      <Cell $w={43}>状态</Cell>
      <Cell $w={65}>Gizmos</Cell>
      <Cell $w={23} $line={false} aria-label="Gizmo options"><Caret /></Cell>
    </GameToolbar>
    <Viewport $game />
  </Panel>
);

const HierarchyPanel = () => (
  <Panel>
    <TabStrip>
      <Tab $active><HierarchyIcon />层级</Tab>
      <TabTools>
        <IconButton aria-label="Lock"><LockIcon /></IconButton>
        <IconButton aria-label="Menu"><Kebab /></IconButton>
      </TabTools>
    </TabStrip>
    <PanelToolbar>
      <AddButton aria-label="Add"><PlusIcon /><Caret /></AddButton>
      <SearchField>
        <MagnifierIcon menu />
        <input aria-label="Search hierarchy" placeholder="All" />
        <ExpandButton aria-label="Open search"><ExpandIcon /></ExpandButton>
      </SearchField>
    </PanelToolbar>
    <HierarchyBody>
      <SceneRow>
        <Caret w={12} />
        <FaUnity size={17} />
        <span>SampleScene</span>
        <IconButton aria-label="Scene menu"><Kebab /></IconButton>
      </SceneRow>
      <ObjectRow><CubeIcon />Main Camera</ObjectRow>
      <ObjectRow><CubeIcon />Directional Light</ObjectRow>
    </HierarchyBody>
  </Panel>
);

const ProjectPanel = () => (
  <Panel>
    <TabStrip>
      <Tab $active $pad={9}><FolderIcon />项目</Tab>
      <Tab><VersionIcon />Unity Version Control</Tab>
      <TabTools>
        <IconButton aria-label="Lock"><LockIcon /></IconButton>
        <IconButton aria-label="Menu"><Kebab /></IconButton>
      </TabTools>
    </TabStrip>
    <PanelToolbar>
      <AddButton aria-label="Add"><PlusIcon /><Caret /></AddButton>
      <SearchField $flush>
        <MagnifierIcon />
        <input aria-label="Search project" />
        <ExpandButton aria-label="Open search"><ExpandIcon /></ExpandButton>
      </SearchField>
      <Cell $w={34} aria-label="Filter by type"><ShapesIcon /></Cell>
      <Cell $w={32} aria-label="Filter by label"><TagIcon /></Cell>
      <Cell $w={33} aria-label="Filter by log"><AlertIcon /></Cell>
      <Cell $w={52} $line={false}><EyeIcon />14</Cell>
    </PanelToolbar>
    <Blank />
    <PathStrip />
  </Panel>
);

const InspectorPanel = () => (
  <Panel>
    <TabStrip>
      <Tab $active><InfoIcon />检查器</Tab>
      <TabTools>
        <IconButton aria-label="Lock"><LockIcon /></IconButton>
        <IconButton aria-label="Menu"><Kebab /></IconButton>
      </TabTools>
    </TabStrip>
  </Panel>
);

export default function App() {
  return (
    <Page>
      <GlobalStyle />
      <TitleBar>
        <AppIcon />
        <h1>My project001 - SampleScene - Windows, Mac, Linux - Unity 2022.3.38f1c1 &lt;DX11&gt;</h1>
        <Group $gap={0}>
          <WindowButton aria-label="Minimize">
            <svg width="13" height="13" viewBox="0 0 13 13" stroke="currentColor"><path d="M0 6.500h13" /></svg>
          </WindowButton>
          <WindowButton aria-label="Restore">
            <svg width="13" height="13" viewBox="0 0 13 13" stroke="currentColor" fill="none" strokeWidth="1.300">
              <rect x="1" y="3.500" width="8.500" height="8.500" rx="1.500" />
              <path d="M3.500 1H10q2 0 2 2v6" />
            </svg>
          </WindowButton>
          <WindowButton aria-label="Close window">
            <svg width="13" height="13" viewBox="0 0 13 13" stroke="currentColor" strokeWidth="1.200"><path d="M.5.5l12 12M12.500.5l-12 12" /></svg>
          </WindowButton>
        </Group>
      </TitleBar>
      <MenuBar>{menus.map((m) => <button key={m}>{m}</button>)}</MenuBar>
      <MainToolbar>
        <Group>
          <DarkButton $wide><UserIcon />W<Caret /></DarkButton>
          <DarkButton aria-label="Cloud"><CloudIcon /></DarkButton>
          <DarkButton aria-label="Version control"><VersionIcon size={14} /></DarkButton>
        </Group>
        <Group $gap={1}>
          <DarkButton aria-label="Play"><svg width="11" height="13" viewBox="0 0 11 13" fill="currentColor"><path d="M0 0l11 6.500L0 13z" /></svg></DarkButton>
          <DarkButton aria-label="Pause"><svg width="11" height="13" viewBox="0 0 11 13" fill="currentColor"><path d="M0 0h4v13H0zM7 0h4v13H7z" /></svg></DarkButton>
          <DarkButton $dim aria-label="Step"><svg width="13" height="13" viewBox="0 0 13 13" fill="currentColor"><path d="M0 0l9 6.500L0 13zM10.500 0H13v13h-2.500z" /></svg></DarkButton>
        </Group>
        <Group $end>
          <DarkButton aria-label="History"><MdHistory size={19} /></DarkButton>
          <DarkButton aria-label="Search"><SearchIcon /></DarkButton>
          <Dropdown label="Layers" value="图层" $dark />
          <Dropdown label="Layout" value="Layout" $dark />
        </Group>
      </MainToolbar>
      <Workspace>
        <Column>
          <ScenePanel />
          <GamePanel />
        </Column>
        <HierarchyPanel />
        <ProjectPanel />
        <InspectorPanel />
      </Workspace>
      <StatusBar>
        <svg width="136" height="27" viewBox="0 0 136 27">
          <path d="M0 0h136v7Q60 5 0 0z" fill="#303030" />
          <path d="M12 20l4 3 4-3M22 20l2 3M47 21h7M56 20l1 3M78 20q4 4 8 0M112 20q4 4 8 0" stroke="#777" fill="none" />
        </svg>
      </StatusBar>
      <ImportDialog />
    </Page>
  );
}
